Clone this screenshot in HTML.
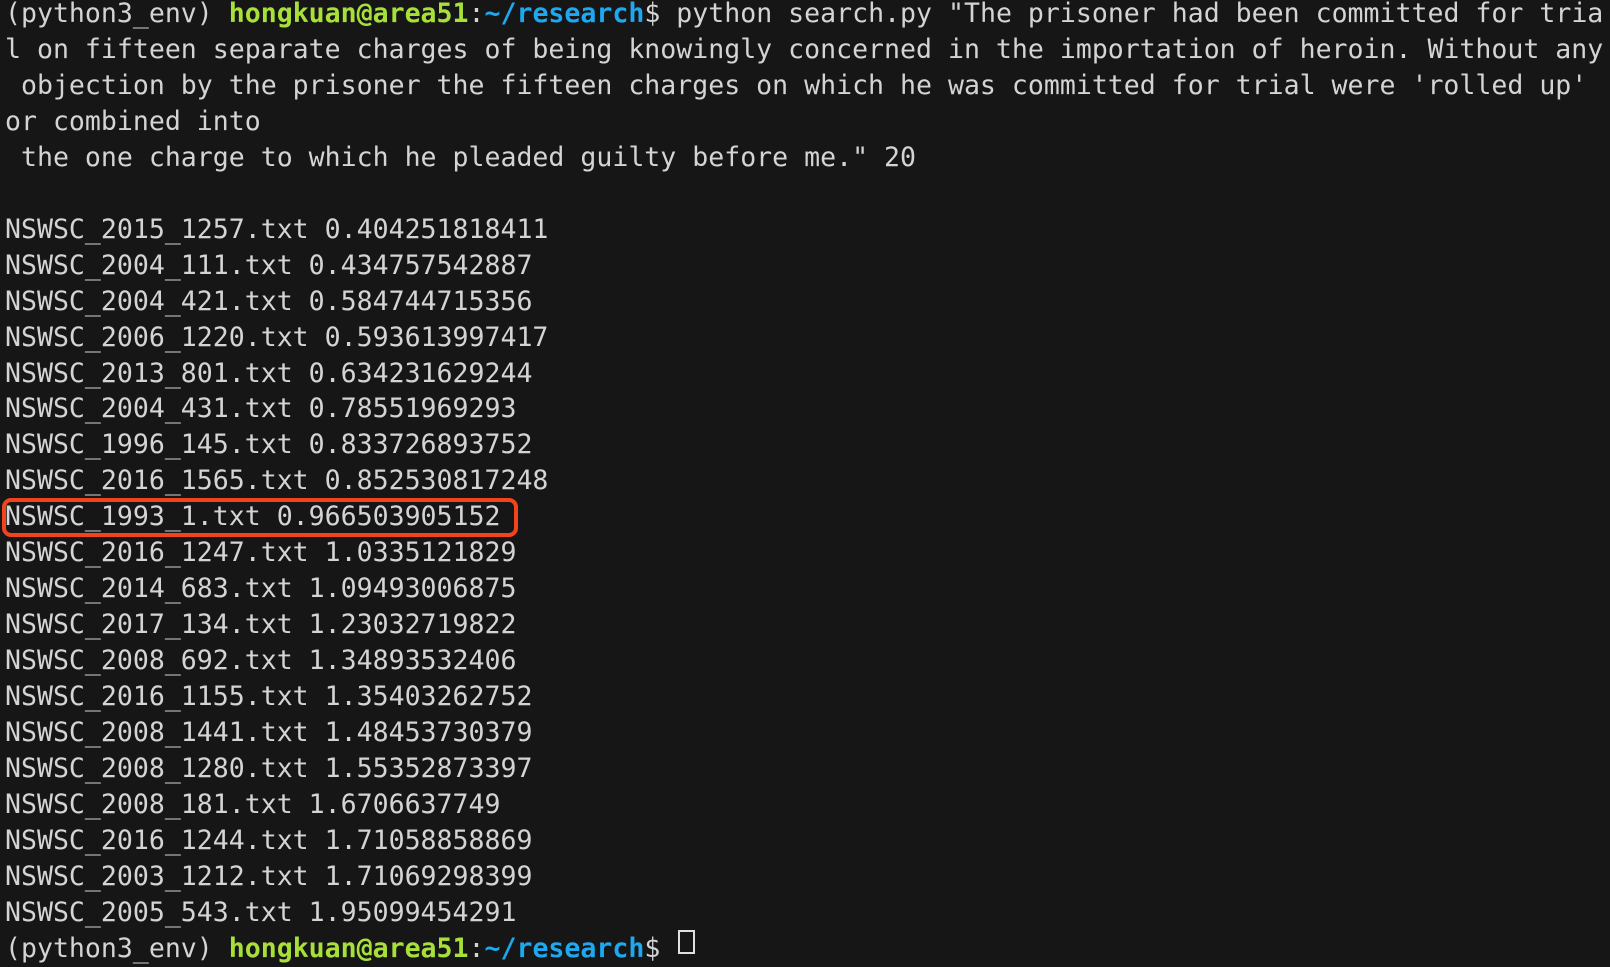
<!DOCTYPE html>
<html><head><style>
html,body{margin:0;padding:0;background:#161616;width:1610px;height:940px;overflow:hidden}
pre{position:absolute;left:5px;top:-4px;margin:0;font-family:"DejaVu Sans Mono","Liberation Mono",monospace;font-size:26.55px;line-height:35.95px;color:#d4d4d4;white-space:pre}
.g{color:#a8e03a;font-weight:bold}.b{color:#1ea8f0;font-weight:bold}
.box{position:absolute;left:2px;top:498px;width:508px;height:31px;border:4px solid #f2441c;border-radius:9px}
.cur{position:absolute;left:678px;top:930px;width:13px;height:20px;border:2px solid #e0e0e0}
</style></head><body>
<pre>(python3_env) <span class="g">hongkuan@area51</span>:<span class="b">~/research</span>$ python search.py "The prisoner had been committed for tria
l on fifteen separate charges of being knowingly concerned in the importation of heroin. Without any
 objection by the prisoner the fifteen charges on which he was committed for trial were 'rolled up'
or combined into
 the one charge to which he pleaded guilty before me." 20

NSWSC_2015_1257.txt 0.404251818411
NSWSC_2004_111.txt 0.434757542887
NSWSC_2004_421.txt 0.584744715356
NSWSC_2006_1220.txt 0.593613997417
NSWSC_2013_801.txt 0.634231629244
NSWSC_2004_431.txt 0.78551969293
NSWSC_1996_145.txt 0.833726893752
NSWSC_2016_1565.txt 0.852530817248
NSWSC_1993_1.txt 0.966503905152
NSWSC_2016_1247.txt 1.0335121829
NSWSC_2014_683.txt 1.09493006875
NSWSC_2017_134.txt 1.23032719822
NSWSC_2008_692.txt 1.34893532406
NSWSC_2016_1155.txt 1.35403262752
NSWSC_2008_1441.txt 1.48453730379
NSWSC_2008_1280.txt 1.55352873397
NSWSC_2008_181.txt 1.6706637749
NSWSC_2016_1244.txt 1.71058858869
NSWSC_2003_1212.txt 1.71069298399
NSWSC_2005_543.txt 1.95099454291
(python3_env) <span class="g">hongkuan@area51</span>:<span class="b">~/research</span>$ </pre>
<div class="box"></div>
<div class="cur"></div>
</body></html>
